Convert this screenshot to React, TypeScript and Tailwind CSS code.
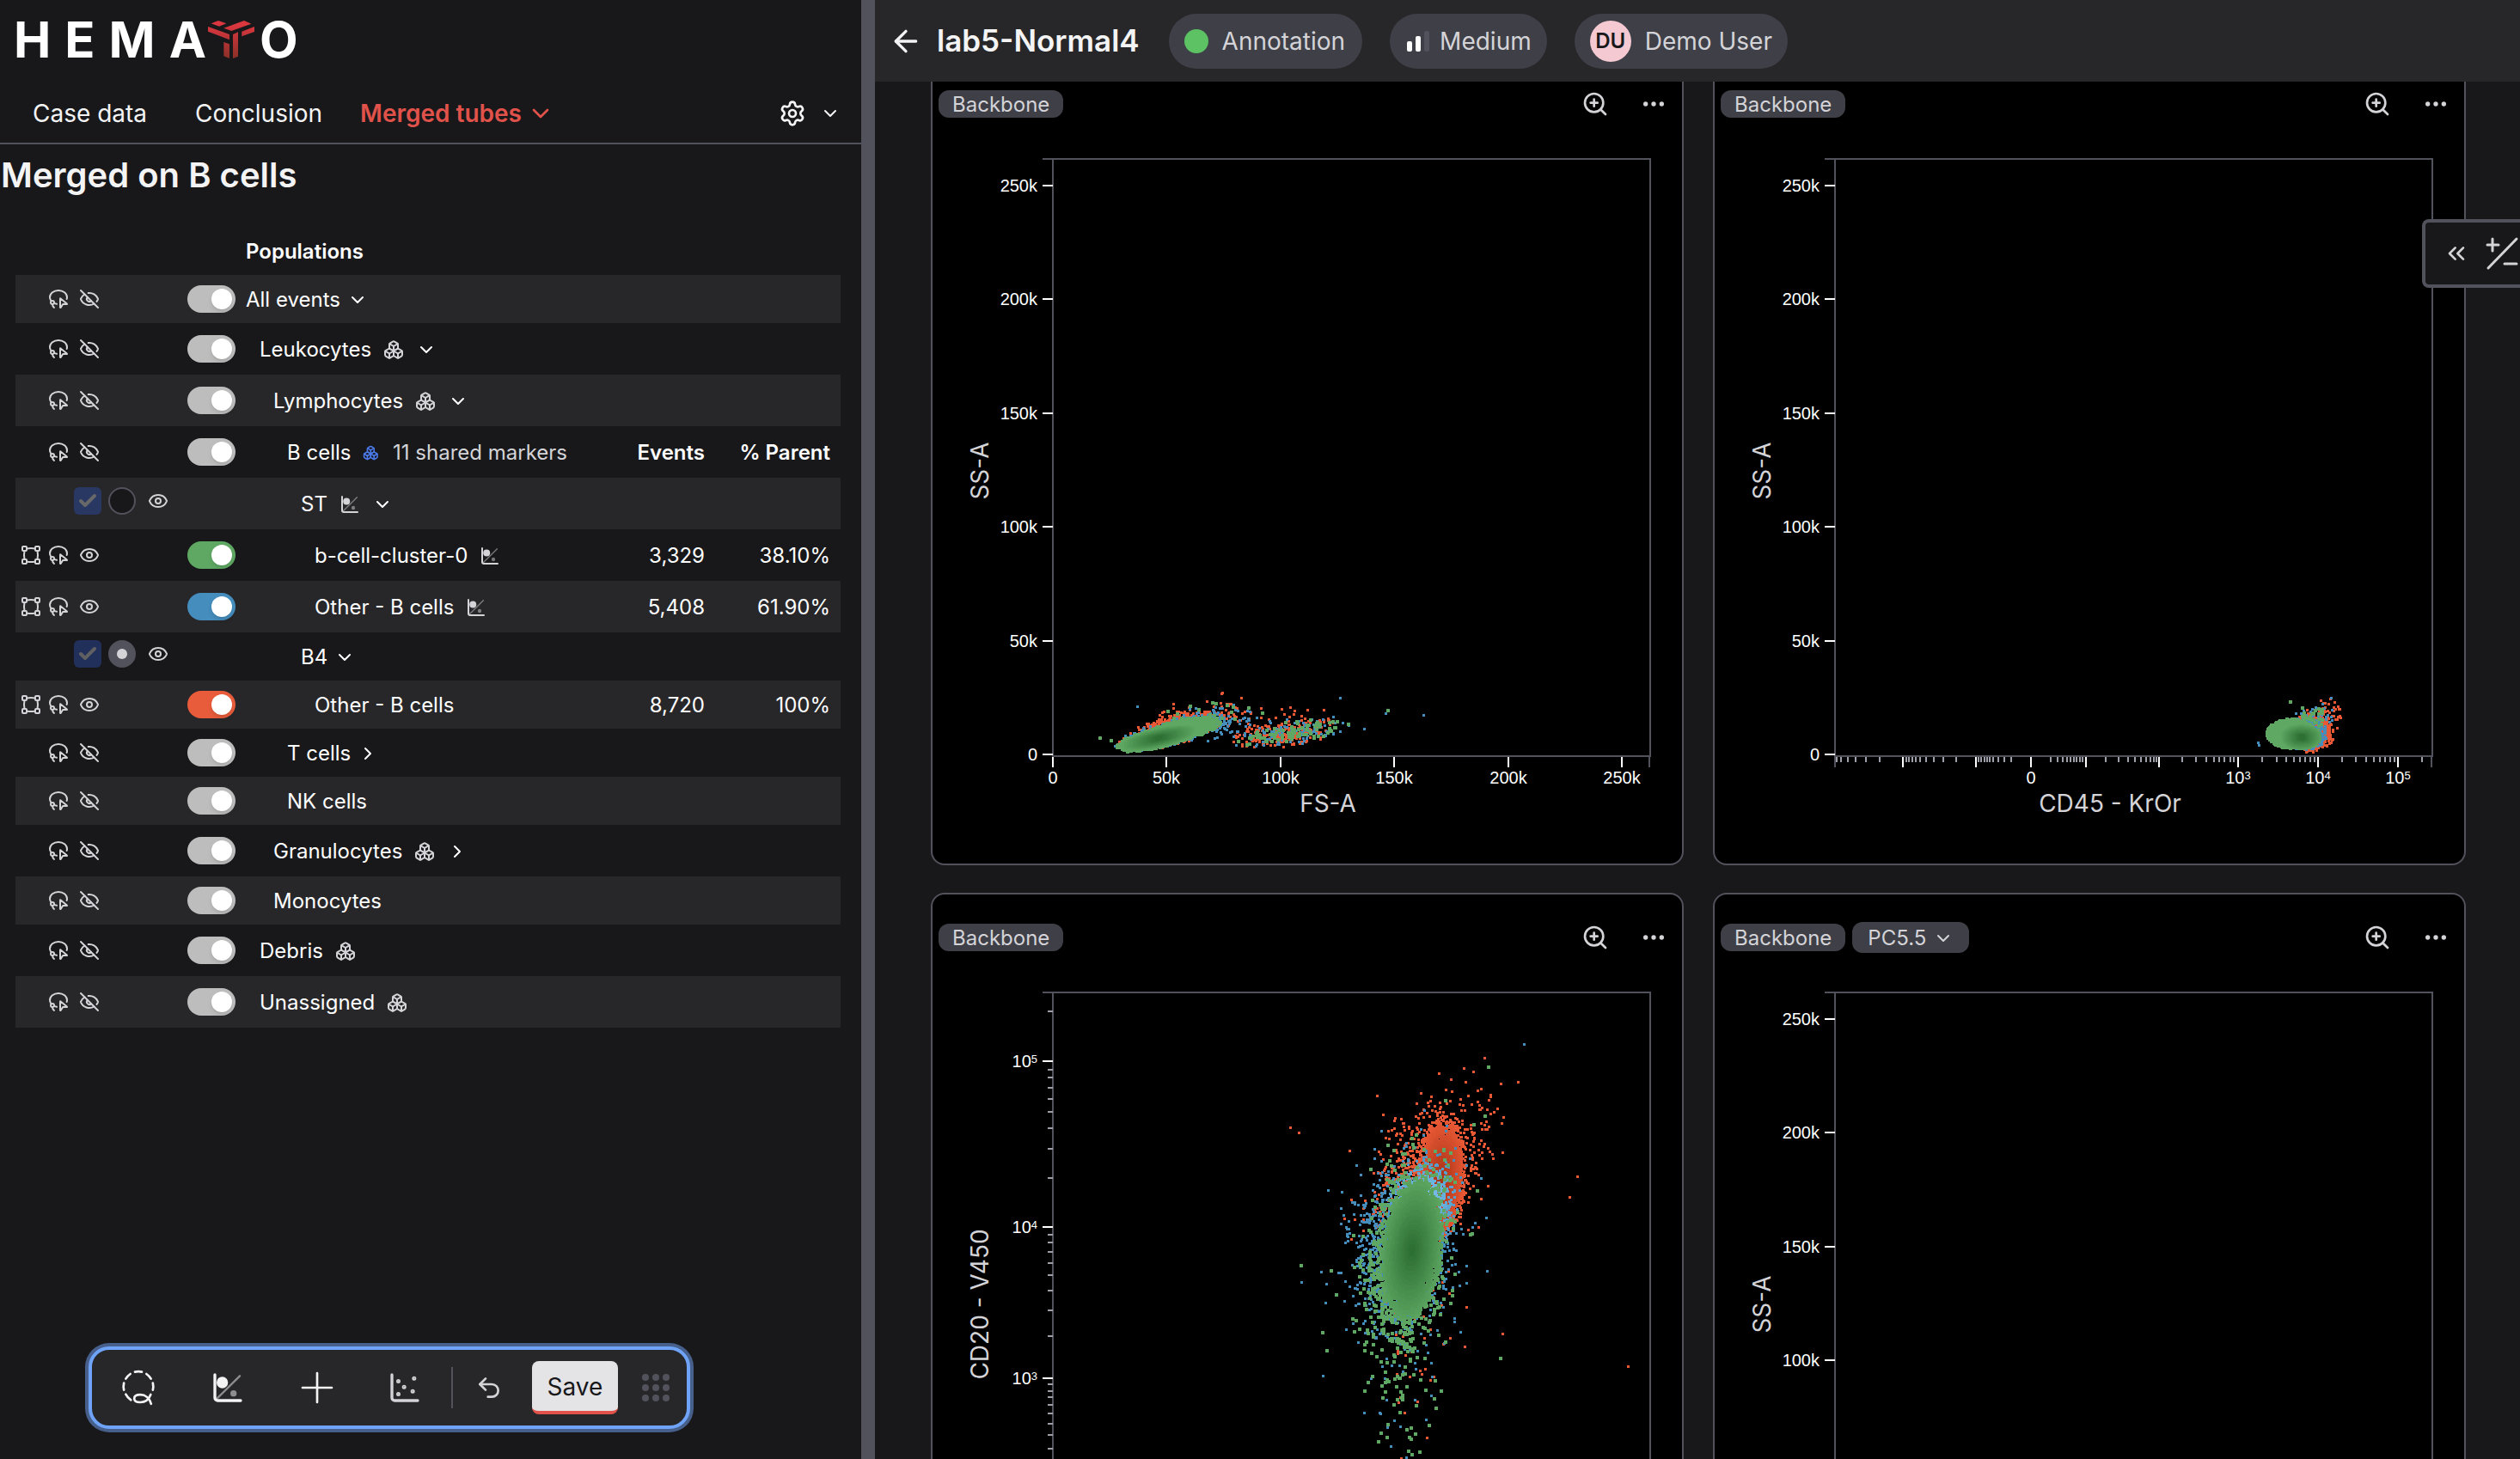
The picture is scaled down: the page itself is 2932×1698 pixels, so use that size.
import type { ReactNode } from 'react'
import {
  ArrowLeft,
  Boxes,
  ChartScatter,
  Check,
  ChevronDown,
  ChevronRight,
  ChevronsLeft,
  Ellipsis,
  Eye,
  EyeOff,
  LassoSelect,
  Settings,
  Undo2,
  VectorSquare,
  ZoomIn,
} from 'lucide-react'
import clsx from 'clsx'

type Row = {
  name: string
  level: number
  tall?: boolean
  kind?: 'tube'
  color?: string
  own?: boolean
  boxes?: 'gray' | 'blue'
  gate?: boolean
  note?: string
  chevron?: 'down' | 'right'
  selected?: boolean
  events?: string
  parent?: string
  strong?: boolean
}

const INDENT = ['pl-0', 'pl-4', 'pl-8', 'pl-12', 'pl-16', 'pl-20']

const rows: Row[] = [
  { name: 'All events', level: 0, chevron: 'down' },
  { name: 'Leukocytes', level: 1, tall: true, boxes: 'gray', chevron: 'down' },
  { name: 'Lymphocytes', level: 2, tall: true, boxes: 'gray', chevron: 'down' },
  {
    name: 'B cells',
    level: 3,
    tall: true,
    boxes: 'blue',
    note: '11 shared markers',
    events: 'Events',
    parent: '% Parent',
    strong: true,
  },
  { name: 'ST', level: 4, tall: true, kind: 'tube', gate: true, chevron: 'down' },
  { name: 'b-cell-cluster-0', level: 5, tall: true, own: true, gate: true, color: 'bg-[#5fa863]', events: '3,329', parent: '38.10%' },
  { name: 'Other - B cells', level: 5, tall: true, own: true, gate: true, color: 'bg-[#458dbd]', events: '5,408', parent: '61.90%' },
  { name: 'B4', level: 4, kind: 'tube', chevron: 'down', selected: true },
  { name: 'Other - B cells', level: 5, own: true, color: 'bg-[#e85c3b]', events: '8,720', parent: '100%' },
  { name: 'T cells', level: 3, chevron: 'right' },
  { name: 'NK cells', level: 3 },
  { name: 'Granulocytes', level: 2, tall: true, boxes: 'gray', chevron: 'right' },
  { name: 'Monocytes', level: 2 },
  { name: 'Debris', level: 1, tall: true, boxes: 'gray' },
  { name: 'Unassigned', level: 1, tall: true, boxes: 'gray' },
]

function GateIcon({ className }: { className?: string }) {
  return (
    <svg viewBox="0 0 24 24" fill="none" stroke="currentColor" strokeLinecap="round" strokeLinejoin="round" className={className}>
      <path d="M4 20 20.4 3.8" strokeWidth="1.4" opacity="0.5" />
      <path d="M3 3v16a2 2 0 0 0 2 2h16" strokeWidth="2" />
      <circle cx="8.2" cy="8.4" r="4" fill="currentColor" stroke="none" />
      <circle cx="16" cy="16" r="2.2" fill="currentColor" stroke="none" opacity="0.5" />
    </svg>
  )
}

function LassoIcon({ className }: { className?: string }) {
  return (
    <svg viewBox="0 0 24 24" fill="none" stroke="currentColor" strokeWidth="1.6" strokeLinecap="round" className={className}>
      <path d="M9.6 1a10.3 10.3 0 0 1 4.8 0" />
      <path d="M17.6 2.4a10.3 10.3 0 0 1 3.2 3.4" />
      <path d="M22.1 8.8a10.3 10.3 0 0 1 0 4.8" />
      <path d="M6.4 2.4a10.3 10.3 0 0 0-3.2 3.4" />
      <path d="M1.9 8.8a10.3 10.3 0 0 0 0 4.8" />
      <path d="M3.2 16.6a10.3 10.3 0 0 0 3.6 4" />
      <path d="M20.6 16.8c-1.2 3.2-3.6 5.4-7.2 5.4-2.9 0-4.3-1.1-4.3-2.6s1.4-2.7 4.3-2.7c3.4 0 6.4 2.4 7.5 6.4" />
    </svg>
  )
}

function LogoMark() {
  return (
    <svg viewBox="0 0 162 132" className="h-11 w-[54px]" aria-hidden="true">
      <defs>
        <linearGradient id="mark" x1="0" y1="0" x2="0" y2="132" gradientUnits="userSpaceOnUse">
          <stop offset="0.1" stopColor="#dc373f" />
          <stop offset="1" stopColor="#8a3028" />
        </linearGradient>
      </defs>
      <g fill="url(#mark)">
        <path d="M36 0 64 10 39 20 11 10Z" />
        <path d="M126 0 151 11 82 36 55 26Z" />
        <path d="M0 21 75 48V67L0 38Z" />
        <path d="M162 21V39L118 55V38Z" />
        <path d="M87 48 105 40V125L87 132Z" />
        <path d="M55 75 75 82V132L55 124Z" />
      </g>
    </svg>
  )
}

function IconButton({ label, className, children }: { label: string; className?: string; children: ReactNode }) {
  return (
    <button type="button" aria-label={label} className={clsx('flex items-center justify-center', className)}>
      {children}
    </button>
  )
}

function PopulationRow({ row, index }: { row: Row; index: number }) {
  const tube = row.kind === 'tube'
  return (
    <tr className={clsx(row.tall ? 'h-15' : 'h-14', index % 2 === 0 && 'bg-zinc-800')}>
      <td className="p-0 text-zinc-300">
        {tube ? (
          <div className="flex items-center pb-1.5 pl-17">
            <label className="relative block h-8 w-8 opacity-50">
              <input type="checkbox" defaultChecked disabled aria-label={`Include ${row.name}`} className="block h-8 w-8 appearance-none rounded-md bg-[#2b499a]" />
              <Check className="absolute top-1 left-1 h-6 w-6 text-[#a8a8a8]" strokeWidth={4} />
            </label>
            <input
              type="radio"
              name="tube"
              aria-label={`Select ${row.name}`}
              defaultChecked={row.selected}
              className="ml-2 flex h-8 w-8 appearance-none items-center justify-center rounded-full border-2 border-zinc-600 bg-zinc-900 before:h-3 before:w-3 before:rounded-full checked:bg-zinc-600 checked:before:bg-zinc-300"
            />
            <IconButton label={`Hide ${row.name}`} className="ml-3.5">
              <Eye className="h-6 w-6" />
            </IconButton>
          </div>
        ) : (
          <div className={clsx('flex items-center', row.own ? 'pl-1.5' : 'pl-[38px]')}>
            {row.own && (
              <IconButton label="Edit gate" className="mr-2">
                <VectorSquare className="h-6 w-6" />
              </IconButton>
            )}
            <IconButton label="Lasso select">
              <LassoSelect className="h-6 w-6" />
            </IconButton>
            <IconButton label="Toggle visibility" className="ml-3">
              {row.own ? <Eye className="h-6 w-6" /> : <EyeOff className="h-6 w-6" />}
            </IconButton>
          </div>
        )}
      </td>
      <td className="p-0">
        {!tube && (
          <input
            type="checkbox"
            defaultChecked
            aria-label={`Show ${row.name}`}
            className={clsx(
              'flex h-8 w-14 appearance-none items-center rounded-full pl-1 before:h-6 before:w-6 before:rounded-full before:bg-white before:shadow-md checked:pl-7',
              row.color ?? 'bg-[#bdbdbd]',
            )}
          />
        )}
      </td>
      <td className="p-0 pt-0.5">
        <div className={clsx('flex items-center gap-2 whitespace-nowrap', INDENT[row.level])}>
          <span>{row.name}</span>
          {row.boxes && <Boxes className={clsx('mx-1.5 h-6 w-6', row.boxes === 'blue' ? 'text-[#4b7bec]' : 'text-zinc-300')} />}
          {row.gate && <GateIcon className="mx-1.5 h-6 w-6 text-zinc-300" />}
          {row.note && <span className="pl-0.5 text-zinc-300">{row.note}</span>}
          {row.chevron && (
            <IconButton label={`Expand ${row.name}`}>
              {row.chevron === 'down' ? <ChevronDown className="h-6 w-6" /> : <ChevronRight className="h-6 w-6" />}
            </IconButton>
          )}
        </div>
      </td>
      <td className={clsx('p-0 pt-0.5 text-right', row.strong && 'font-semibold')}>{row.events}</td>
      <td className={clsx('p-0 pt-0.5 pr-3 text-right', row.strong && 'font-semibold')}>{row.parent}</td>
    </tr>
  )
}

function Toolbar() {
  return (
    <div className="absolute bottom-[35px] left-[103px] flex h-24 w-[700px] items-center rounded-3xl border-4 border-[#6fa3f8] bg-zinc-800 pl-0.5 ring-4 ring-[#475f8b]">
      <IconButton label="Lasso gate" className="h-20 w-26">
        <LassoIcon className="h-10 w-10 overflow-visible" />
      </IconButton>
      <IconButton label="Split gate" className="h-20 w-26">
        <GateIcon className="h-10 w-10" />
      </IconButton>
      <IconButton label="Quadrant gate" className="h-20 w-26">
        <svg viewBox="0 0 24 24" fill="none" stroke="currentColor" strokeWidth="1.6" strokeLinecap="round" className="h-10 w-10">
          <path d="M12 1.8v20.4M1.8 12h20.4" />
        </svg>
      </IconButton>
      <IconButton label="Cluster" className="h-20 w-25 text-zinc-300">
        <ChartScatter className="h-10 w-10" />
      </IconButton>
      <div className="ml-1 h-12 w-0.5 bg-zinc-600" />
      <IconButton label="Undo" className="h-20 w-21 text-zinc-300">
        <Undo2 className="h-8 w-8" />
      </IconButton>
      <button type="button" className="ml-2 h-[62px] w-25 rounded-lg border-b-4 border-[#e0524a] bg-zinc-200 pt-0.5 text-[28px] text-zinc-900">
        Save
      </button>
      <div className="ml-7 grid grid-cols-3 gap-1">
        {Array.from({ length: 9 }, (_, i) => (
          <span key={i} className="h-2 w-2 rounded-full bg-zinc-600" />
        ))}
      </div>
    </div>
  )
}

function Sidebar() {
  return (
    <aside className="relative min-w-0 overflow-hidden bg-zinc-900">
      <div className="border-b-2 border-zinc-600">
        <div className="flex h-[92px] items-center pl-4 text-[58px] leading-none font-bold text-white">
          <div className="flex gap-4">
            <span>H</span>
            <span>E</span>
            <span>M</span>
            <span>A</span>
          </div>
          <span className="ml-0.5">
            <LogoMark />
          </span>
          <span className="ml-1.5">O</span>
        </div>
        <nav className="flex h-[74px] items-center pt-1.5 pr-6 pl-[38px] text-[28px]">
          <a href="#case">Case data</a>
          <a href="#conclusion" className="ml-14">
            Conclusion
          </a>
          <button type="button" className="ml-11 flex items-center gap-1.5 font-semibold text-[#e0524a]">
            Merged tubes
            <ChevronDown className="h-8 w-8" />
          </button>
          <button type="button" aria-label="Settings" className="ml-auto flex items-center gap-4">
            <Settings className="h-8 w-8" />
            <ChevronDown className="h-6 w-6" />
          </button>
        </nav>
      </div>
      <h2 className="flex h-[70px] items-center pt-0.5 pl-px text-[40px] font-semibold">Merged on B cells</h2>
      <div className="pt-[26px] pr-6 pl-[18px]">
        <table className="w-full table-fixed text-2xl text-white">
          <colgroup>
            <col className="w-[200px]" />
            <col className="w-[68px]" />
            <col />
            <col className="w-[160px]" />
            <col className="w-[158px]" />
          </colgroup>
          <thead>
            <tr className="h-14 text-left">
              <td className="p-0" />
              <td className="p-0" />
              <th className="p-0 pt-0.5 font-semibold">Populations</th>
              <td className="p-0" />
              <td className="p-0" />
            </tr>
          </thead>
          <tbody>
            {rows.map((row, i) => (
              <PopulationRow key={i} row={row} index={i} />
            ))}
          </tbody>
        </table>
      </div>
      <Toolbar />
    </aside>
  )
}

// ---- scatter data ----

function mulberry(seed: number) {
  let a = seed
  return () => {
    a = (a + 0x6d2b79f5) | 0
    let t = Math.imul(a ^ (a >>> 15), 1 | a)
    t = (t + Math.imul(t ^ (t >>> 7), 61 | t)) ^ t
    return ((t ^ (t >>> 14)) >>> 0) / 4294967296
  }
}

type Cloud = {
  n: number
  x: number
  y: number
  sx: number
  sy: number
  // shift of x for every unit of y deviation
  tilt?: number
  // shift of y for every unit of x deviation
  slope?: number
  max?: number
}

type RGB = [number, number, number]
type Series = { size: number; from: RGB; to: RGB; radius: number; clouds: Cloud[]; extra?: number[][] }

const STEPS = 16

const GREEN: RGB = [95, 168, 99]
const GREEN_CORE: RGB = [46, 112, 52]
const RED: RGB = [232, 88, 52]
const RED_CORE: RGB = [170, 52, 24]
const BLUE: RGB = [69, 141, 189]
const BLUE_CORE: RGB = [132, 204, 245]

function mix(a: RGB, b: RGB, t: number) {
  return `rgb(${a.map((v, i) => Math.round(v + (b[i] - v) * t)).join(',')})`
}

// Points are bucketed by distance to the first cloud, the core gets the first shade.
function buildPaths(series: Series, seed: number) {
  const rand = mulberry(seed)
  const normal = () => Math.sqrt(-2 * Math.log(rand() + 1e-9)) * Math.cos(2 * Math.PI * rand())
  const buckets = Array.from({ length: STEPS }, () => [] as string[])
  const core = series.clouds[0]
  const put = (x: number, y: number) => {
    if (x < 2 || x > 690 || y < 2 || y > 690) return
    const dx = x - core.x
    const dy = y - core.y
    const u = (dx - (core.tilt ?? 0) * dy) / core.sx
    const v = (dy - (core.slope ?? 0) * dx) / core.sy
    const b = Math.min(STEPS - 1, Math.floor((Math.hypot(u, v) / series.radius) * STEPS))
    const s = series.size
    buckets[b].push(`M${Math.round(x)} ${Math.round(y)}h${s}v${s}h-${s}z`)
  }
  for (const c of series.clouds) {
    for (let i = 0; i < c.n; i++) {
      const u = normal()
      const v = normal()
      if (c.max && Math.hypot(u, v) > c.max) continue
      put(c.x + u * c.sx + (c.tilt ?? 0) * v * c.sy, c.y + v * c.sy + (c.slope ?? 0) * u * c.sx)
    }
  }
  series.extra?.forEach(([x, y]) => put(x, y))
  // outermost first so that the dense core ends on top
  return buckets.map((b, i) => ({ d: b.join(''), fill: mix(series.from, series.to, i / (STEPS - 1)) })).reverse()
}

const forwardSide: Series[] = [
  {
    size: 3,
    from: RED,
    to: RED,
    radius: 2,
    clouds: [
      { n: 1300, x: 137, y: 664, sx: 24, sy: 7, slope: -0.24, max: 2.6 },
      { n: 100, x: 180, y: 645, sx: 32, sy: 11, slope: -0.1, max: 2.2 },
      { n: 240, x: 268, y: 667, sx: 30, sy: 7, slope: -0.12, max: 2.3 },
      { n: 35, x: 255, y: 650, sx: 36, sy: 11, max: 2 },
    ],
  },
  {
    size: 3,
    from: BLUE,
    to: BLUE,
    radius: 2,
    clouds: [
      { n: 1000, x: 138, y: 666, sx: 26, sy: 6, slope: -0.24, max: 2.6 },
      { n: 90, x: 190, y: 653, sx: 22, sy: 11, max: 2.2 },
      { n: 120, x: 275, y: 665, sx: 34, sy: 7, slope: -0.12, max: 2.3 },
    ],
    extra: [[97, 636], [333, 626], [386, 644], [430, 646], [361, 662]],
  },
  {
    size: 4,
    from: GREEN_CORE,
    to: GREEN,
    radius: 2.1,
    clouds: [
      { n: 2800, x: 121, y: 672, sx: 21, sy: 5, slope: -0.22, max: 2.3 },
      { n: 1200, x: 146, y: 663, sx: 24, sy: 6, slope: -0.22, max: 2 },
      { n: 90, x: 275, y: 665, sx: 32, sy: 6, slope: -0.14, max: 2.2 },
      { n: 20, x: 170, y: 647, sx: 36, sy: 9, max: 2 },
    ],
    extra: [[388, 640], [53, 672], [66, 675], [184, 631], [226, 637], [242, 643]],
  },
]

const cd45Side: Series[] = [
  {
    size: 3,
    from: RED,
    to: RED,
    radius: 2,
    clouds: [
      { n: 1100, x: 552, y: 667, sx: 11, sy: 9, max: 2.5 },
      { n: 90, x: 566, y: 649, sx: 12, sy: 11, slope: -0.3, max: 2.1 },
    ],
  },
  {
    size: 3,
    from: BLUE,
    to: BLUE,
    radius: 2,
    clouds: [
      { n: 1000, x: 544, y: 668, sx: 12, sy: 8, max: 2.3 },
      { n: 50, x: 556, y: 649, sx: 12, sy: 9, max: 2.1 },
    ],
    extra: [[576, 626], [491, 678], [492, 681]],
  },
  {
    size: 4,
    from: GREEN_CORE,
    to: GREEN,
    radius: 2.4,
    clouds: [
      { n: 1800, x: 541, y: 671, sx: 10, sy: 6, max: 2.2 },
      { n: 1800, x: 529, y: 667, sx: 15, sy: 9, max: 1.9 },
      { n: 40, x: 550, y: 651, sx: 13, sy: 8, max: 2 },
    ],
    extra: [[528, 630], [542, 637]],
  },
]

const cd20: Series[] = [
  {
    size: 3,
    from: RED_CORE,
    to: RED,
    radius: 2.4,
    clouds: [
      { n: 4600, x: 450, y: 217, sx: 12, sy: 30, tilt: -0.06, max: 2.5 },
      { n: 1000, x: 436, y: 212, sx: 26, sy: 38, tilt: -0.25 },
      { n: 80, x: 468, y: 155, sx: 27, sy: 32, tilt: -0.4, max: 2.1 },
      { n: 60, x: 425, y: 400, sx: 24, sy: 70, max: 2.2 },
    ],
    extra: [[275, 156], [285, 162], [609, 213], [600, 237], [540, 103], [522, 185], [522, 396], [480, 365], [668, 434], [448, 93], [488, 91], [376, 119], [478, 411]],
  },
  {
    size: 3,
    from: BLUE_CORE,
    to: BLUE,
    radius: 3,
    clouds: [
      { n: 900, x: 430, y: 240, sx: 17, sy: 20, tilt: -0.05, max: 2.2 },
      { n: 1500, x: 406, y: 293, sx: 27, sy: 44, tilt: -0.1 },
      { n: 50, x: 405, y: 430, sx: 26, sy: 60, max: 2 },
    ],
    extra: [[547, 59], [319, 229], [504, 323], [288, 336], [313, 445]],
  },
  {
    size: 4,
    from: GREEN_CORE,
    to: GREEN,
    radius: 2.6,
    clouds: [
      { n: 4600, x: 416, y: 298, sx: 15, sy: 35, tilt: -0.08, max: 2.4 },
      { n: 1000, x: 407, y: 303, sx: 23, sy: 46, tilt: -0.1 },
      { n: 130, x: 408, y: 425, sx: 22, sy: 60, max: 2.3 },
      { n: 40, x: 425, y: 220, sx: 22, sy: 28, max: 2 },
    ],
    extra: [[505, 85], [501, 142], [287, 316], [312, 394], [317, 415], [519, 424], [455, 124], [488, 152]],
  },
]

type Tick = { at: number; label?: string; exp?: string; minor?: boolean; dim?: boolean }

const linearX: Tick[] = [
  { at: 0, label: '0' },
  { at: 132, label: '50k' },
  { at: 265, label: '100k' },
  { at: 397, label: '150k' },
  { at: 530, label: '200k' },
  { at: 662, label: '250k' },
  { at: 694, dim: true },
]

const linearY: Tick[] = [
  { at: 0, dim: true },
  { at: 31, label: '250k' },
  { at: 163, label: '200k' },
  { at: 296, label: '150k' },
  { at: 428, label: '100k' },
  { at: 561, label: '50k' },
  { at: 693, label: '0' },
]

const minor = (list: number[]): Tick[] => list.map((at) => ({ at, minor: true }))

const biexX: Tick[] = [
  { at: 0, dim: true },
  { at: 79 },
  { at: 164 },
  { at: 228, label: '0' },
  { at: 292 },
  { at: 377 },
  { at: 469, label: '10', exp: '3' },
  { at: 562, label: '10', exp: '4' },
  { at: 655, label: '10', exp: '5' },
  { at: 694, dim: true },
  ...minor([2, 7, 15, 24, 36, 52, 83, 86, 90, 94, 99, 106, 115, 126, 141, 167, 170, 174, 177, 180, 184, 190, 197, 205]),
  ...minor([251, 259, 265, 270, 274, 278, 281, 285, 288, 315, 330, 341, 349, 356, 362, 367, 371, 374]),
  ...minor([404, 420, 432, 441, 447, 453, 460, 464, 497, 514, 525, 534, 541, 547, 553, 558, 590, 606, 618, 627, 634, 640, 646, 651, 683]),
]

const logY: Tick[] = [
  { at: 0, dim: true },
  { at: 80, label: '10', exp: '5' },
  { at: 273, label: '10', exp: '4' },
  { at: 449, label: '10', exp: '3' },
  ...minor([22, 90, 99, 111, 124, 139, 158, 182, 216, 282, 291, 302, 315, 329, 347, 370, 400, 456, 464, 471, 480, 490, 502, 515, 531]),
]

function TickLabel({ tick }: { tick: Tick }) {
  return (
    <>
      {tick.label}
      {tick.exp && (
        <tspan dy="-5" className="text-[13px]">
          {tick.exp}
        </tspan>
      )}
    </>
  )
}

function tickColor(t: Tick) {
  return t.dim ? 'stroke-zinc-600' : t.minor ? 'stroke-zinc-400' : 'stroke-white'
}

type PlotProps = { x?: string; y: string; xTicks: Tick[]; yTicks: Tick[]; series: Series[]; channel?: string }

function Plot({ x, y, xTicks, yTicks, series, channel }: PlotProps) {
  return (
    <section className="rounded-2xl border-2 border-zinc-600 bg-black pt-8">
      <div className="flex h-9 items-center pr-[17px] pl-[7px] text-2xl text-zinc-300">
        <span className="flex h-8 items-center rounded-xl bg-zinc-700 px-4 pt-px">Backbone</span>
        {channel && (
          <button type="button" className="ml-2 flex h-9 items-center gap-2 rounded-xl bg-zinc-700 pt-px pr-[18px] pl-[18px]">
            {channel}
            <ChevronDown className="h-6 w-6" />
          </button>
        )}
        <IconButton label="Zoom in" className="ml-auto">
          <ZoomIn className="h-8 w-8" />
        </IconButton>
        <IconButton label="More" className="ml-9">
          <Ellipsis className="h-8 w-8" />
        </IconButton>
      </div>
      <svg viewBox="0 0 872 866" className="block w-full" role="img" aria-label={`${x ?? ''} ${y}`}>
        <g transform="translate(140 46)">
          {series.map((s, i) => (
            <g key={i}>
              {buildPaths(s, 11 + i * 7).map((p, j) => (
                <path key={j} d={p.d} fill={p.fill} />
              ))}
            </g>
          ))}
          <rect width="695" height="695" fill="none" strokeWidth="2" className="stroke-zinc-600" />
          {yTicks.map((t, i) => (
            <line key={i} x1={t.minor ? -6 : -12} x2="0" y1={t.at} y2={t.at} strokeWidth="2" className={tickColor(t)} />
          ))}
          {xTicks.map((t, i) => (
            <line key={i} y1="696" y2={t.minor ? 702 : 708} x1={t.at} x2={t.at} strokeWidth="2" className={tickColor(t)} />
          ))}
          <g className="fill-white font-['Liberation_Sans',Arial,sans-serif] text-[20px]">
            {yTicks.filter((t) => t.label).map((t) => (
              <text key={t.at} x="-18" y={t.at + 7} textAnchor="end">
                <TickLabel tick={t} />
              </text>
            ))}
            {xTicks.filter((t) => t.label).map((t) => (
              <text key={t.at} x={t.at} y="727" textAnchor="middle">
                <TickLabel tick={t} />
              </text>
            ))}
          </g>
          <g className="fill-zinc-300 text-[28px]" textAnchor="middle">
            {x && (
              <text x="320" y="760">
                {x}
              </text>
            )}
            <text transform="translate(-75 363) rotate(-90)">{y}</text>
          </g>
        </g>
      </svg>
    </section>
  )
}

function Pill({ className, children }: { className?: string; children: ReactNode }) {
  return <div className={clsx('flex h-16 items-center rounded-full bg-zinc-700 text-[28px] text-zinc-300', className)}>{children}</div>
}

function CaseHeader() {
  return (
    <header className="relative z-10 flex h-[95px] shrink-0 items-center gap-8 bg-zinc-800 pl-4">
      <div className="flex items-center gap-4 pr-0.5">
        <a href="#cases" aria-label="Back to cases">
          <ArrowLeft className="h-10 w-10" />
        </a>
        <h1 className="text-[35px] font-semibold">lab5-Normal4</h1>
      </div>
      <Pill className="gap-4 pr-5 pl-[18px]">
        <span className="h-7 w-7 rounded-full bg-[#5cc264]" />
        Annotation
      </Pill>
      <Pill className="gap-3 pr-[18px] pl-5">
        <span className="flex h-6 items-end gap-1">
          <span className="h-3 w-1.5 rounded-xs bg-white" />
          <span className="h-[18px] w-1.5 rounded-xs bg-white" />
          <span className="h-6 w-1.5 rounded-xs bg-zinc-600" />
        </span>
        Medium
      </Pill>
      <Pill className="gap-4 pr-[18px] pl-[18px]">
        <span className="flex h-12 w-12 items-center justify-center rounded-full bg-[#f4c9d2] text-2xl font-semibold text-zinc-900">DU</span>
        Demo User
      </Pill>
    </header>
  )
}

export default function App() {
  return (
    <div className="grid h-screen grid-cols-[minmax(0,1002fr)_16px_minmax(0,1914fr)] overflow-hidden bg-zinc-900 font-['Inter',sans-serif] text-zinc-100">
      <Sidebar />
      <div className="bg-zinc-600" />
      <main className="relative flex min-h-0 min-w-0 flex-col overflow-hidden bg-zinc-900">
        <CaseHeader />
        {/* plots are scrolled a little under the header */}
        <div className="-mt-[26px] grid grid-cols-2 gap-x-[34px] gap-y-8 pr-[63px] pl-[65px]">
          <Plot x="FS-A" y="SS-A" xTicks={linearX} yTicks={linearY} series={forwardSide} />
          <Plot x="CD45 - KrOr" y="SS-A" xTicks={biexX} yTicks={linearY} series={cd45Side} />
          <Plot y="CD20 - V450" xTicks={[]} yTicks={logY} series={cd20} />
          <Plot y="SS-A" xTicks={[]} yTicks={linearY.slice(0, 5)} series={[]} channel="PC5.5" />
        </div>
        <button
          type="button"
          aria-label="Open compensation panel"
          className="absolute top-[255px] right-0 flex h-20 w-[114px] items-center rounded-l-lg border-4 border-r-0 border-zinc-600 bg-zinc-900 pl-5 text-zinc-300"
        >
          <ChevronsLeft className="h-8 w-8 shrink-0" />
          <svg viewBox="0 0 40 40" fill="none" stroke="currentColor" strokeWidth="3" strokeLinecap="round" className="ml-[18px] h-10 w-10 shrink-0">
            <path d="M8 3v14M2 10h13M3 37 36 3M22 32h14" />
          </svg>
        </button>
      </main>
    </div>
  )
}
